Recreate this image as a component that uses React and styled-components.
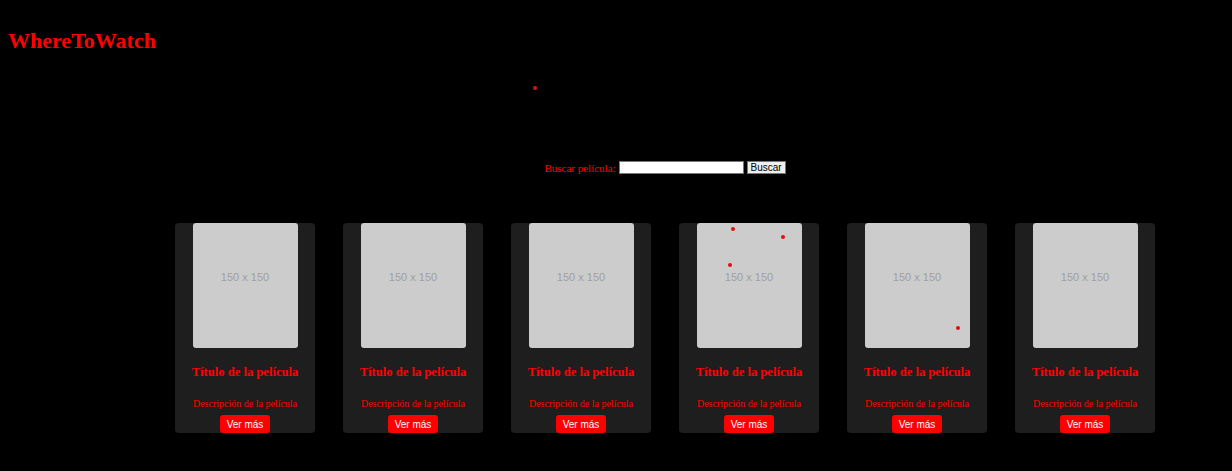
import React from "react";
import styled, { createGlobalStyle } from "styled-components";

const Global = createGlobalStyle`
  html, body { margin: 0; padding: 0; background: #000; }
  body { font-family: "Liberation Serif", "Times New Roman", serif; color: #ff0000; }
`;

const Page = styled.div`
  position: relative;
  min-height: 471px;
  background: #000;
  padding: 8px;
  box-sizing: border-box;
`;

const Header = styled.header`
  height: 56px;
  display: flex;
  align-items: center;
`;

const Logo = styled.h1`
  margin: 0;
  font-size: 22px;
  font-weight: bold;
  color: #ff0000;
  font-family: "Liberation Serif", serif;
  padding-top: 9px;
`;

const Main = styled.main`
  margin-left: 98px;
  display: flex;
  flex-direction: column;
  align-items: center;
`;

const SearchForm = styled.form`
  margin-top: 97px;
  display: flex;
  align-items: center;
  gap: 3px;
  font-size: 11px;
`;

const Label = styled.label`
  color: #ff0000;
  font-family: "Liberation Serif", serif;
  font-size: 11px;
`;

const Input = styled.input`
  width: 121px;
  height: 9px;
  padding: 1px;
  border: 1px solid #767676;
  background: #fff;
  margin: 0;
`;

const Button = styled.button`
  margin: 0;
  height: 13px;
  width: 39px;
  padding: 0;
  font-family: "Liberation Sans", Arial, sans-serif;
  font-size: 10px;
  line-height: 11px;
  background: #efefef;
  border: 1px solid #767676;
  color: #000;
`;

const Grid = styled.section`
  margin-top: 49px;
  display: flex;
  gap: 28px;
`;

const Card = styled.article`
  width: 140px;
  height: 210px;
  background: #1e1e1e;
  border-radius: 4px;
  display: flex;
  flex-direction: column;
  align-items: center;
`;

const Poster = styled.div`
  width: 105px;
  height: 125px;
  box-sizing: border-box;
  padding-bottom: 18px;
  background: #cccccc;
  border-radius: 3px;
  display: flex;
  align-items: center;
  justify-content: center;
  color: #a0a0a0;
  font-family: "Liberation Sans", Arial, sans-serif;
  font-size: 11px;
`;

const Title = styled.h3`
  margin: 17px 0 0;
  font-size: 12.6px;
  font-weight: bold;
  color: #ff0000;
  font-family: "Liberation Serif", serif;
  line-height: 15px;
`;

const Desc = styled.p`
  margin: 18px 0 0;
  font-size: 10px;
  color: #ff0000;
  line-height: 12px;
`;

const More = styled.a`
  margin-top: 5px;
  width: 50px;
  height: 18px;
  background: #ff0000;
  color: #fff;
  border-radius: 3px;
  font-family: "Liberation Sans", Arial, sans-serif;
  font-size: 10px;
  display: flex;
  align-items: center;
  justify-content: center;
  text-decoration: none;
`;

const Dot = styled.span`
  position: absolute;
  width: 4px;
  height: 4px;
  border-radius: 50%;
  background: #e01010;
`;

const dots = [
  [533, 86],
  [731, 227],
  [781, 235],
  [728, 263],
  [956, 326],
];

export default function App() {
  return (
    <>
      <Global />
      <Page>
        <Header>
          <Logo>WhereToWatch</Logo>
        </Header>
        <Main>
          <SearchForm onSubmit={(e) => e.preventDefault()}>
            <Label htmlFor="q">Buscar película:</Label>
            <Input id="q" type="text" />
            <Button type="submit">Buscar</Button>
          </SearchForm>
          <Grid>
            {Array.from({ length: 6 }).map((_, i) => (
              <Card key={i}>
                <Poster>150 x 150</Poster>
                <Title>Título de la película</Title>
                <Desc>Descripción de la película</Desc>
                <More href="#">Ver más</More>
              </Card>
            ))}
          </Grid>
        </Main>
        {dots.map(([x, y], i) => (
          <Dot key={i} style={{ left: x, top: y }} />
        ))}
      </Page>
    </>
  );
}
